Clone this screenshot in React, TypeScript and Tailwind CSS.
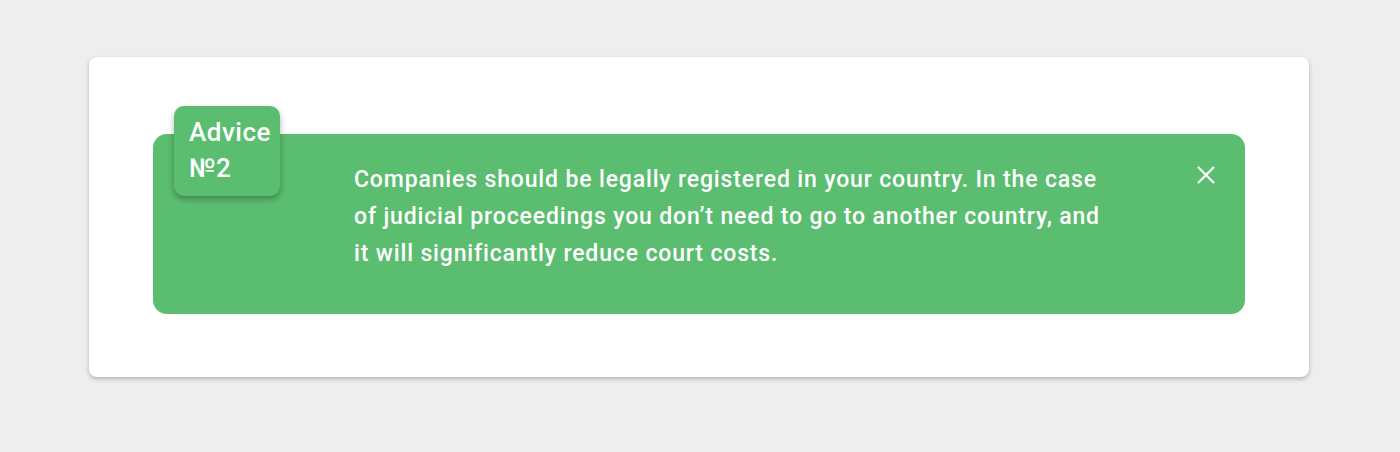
import React from "react";

export default function App() {
  return (
    <div className="min-h-[452px] w-full bg-[#eeeeee] pt-[57px] pl-[89px]" style={{ fontFamily: "Roboto, 'Noto Sans', sans-serif" }}>
      <div className="w-[1220px] bg-white rounded-[8px] shadow-[0_2px_4px_rgba(0,0,0,0.25)] px-16 pt-[77px] pb-[63px]">
        <div className="relative bg-[#5abd6f] rounded-[14px] pt-[27px] pl-[201px] h-[180px]">
          <div className="absolute left-[21px] top-[-28px] w-[106px] h-[90px] bg-[#5abd6f] rounded-[10px] shadow-[0_3px_6px_rgba(0,0,0,0.3)] pl-[15px] pt-[8px] text-white text-[26px] font-medium leading-[36px] tracking-[0.5px]">
            Advice
            <br />
            №2
          </div>
          <p className="w-[760px] text-white text-[23px] font-medium leading-[37px] tracking-[0.85px]">
            Companies should be legally registered in your country. In the case of judicial proceedings you don’t need to go to another country, and it will significantly reduce court costs.
          </p>
          <svg className="absolute left-[1043px] top-[31px]" width="20" height="20" viewBox="0 0 20 20" fill="none">
            <path d="M2 2L18 18M18 2L2 18" stroke="white" strokeWidth="2.2" strokeLinecap="butt" />
          </svg>
        </div>
      </div>
    </div>
  );
}
